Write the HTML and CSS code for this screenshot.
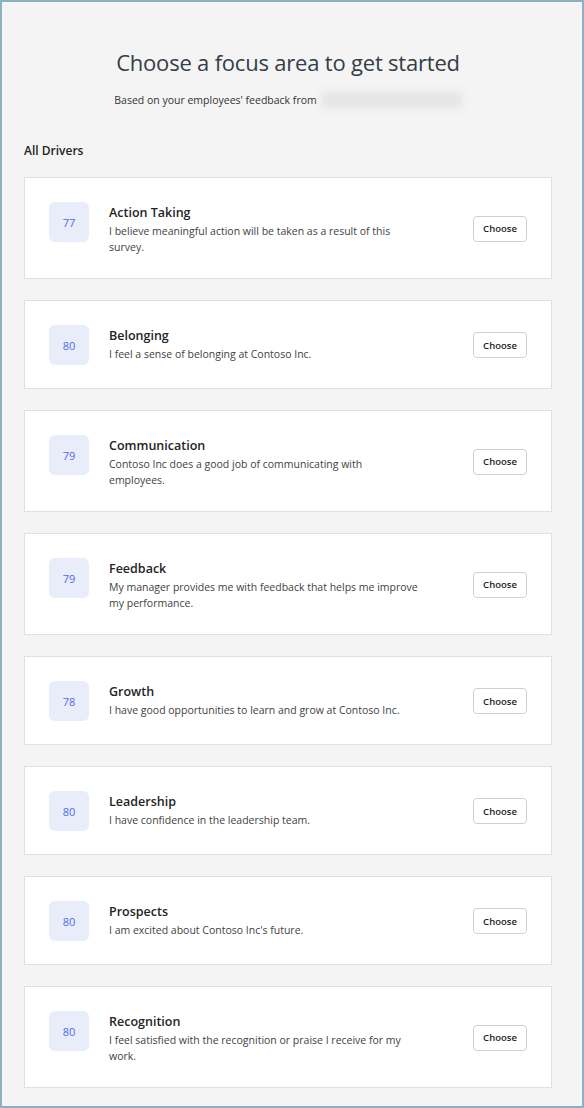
FILE: index.html
```html
<!DOCTYPE html>
<html lang="en">
<head>
<meta charset="utf-8">
<title>Choose a focus area</title>
<link rel="stylesheet" href="styles.css">
</head>
<body>
<div class="frame">
  <header class="intro">
    <h1 class="title">Choose a focus area to get started</h1>
    <p class="subtitle"><span>Based on your employees' feedback from</span><span class="redacted"></span></p>
  </header>
  <h2 class="section">All Drivers</h2>
  <ul class="list">
    <li class="card"><div class="score">77</div><div class="text"><div class="name">Action Taking</div><div class="desc">I believe meaningful action will be taken as a result of this survey.</div></div><button class="choose">Choose</button></li>
    <li class="card"><div class="score">80</div><div class="text"><div class="name">Belonging</div><div class="desc">I feel a sense of belonging at Contoso Inc.</div></div><button class="choose">Choose</button></li>
    <li class="card"><div class="score">79</div><div class="text"><div class="name">Communication</div><div class="desc">Contoso Inc does a good job of communicating with employees.</div></div><button class="choose">Choose</button></li>
    <li class="card"><div class="score">79</div><div class="text"><div class="name">Feedback</div><div class="desc">My manager provides me with feedback that helps me improve my performance.</div></div><button class="choose">Choose</button></li>
    <li class="card"><div class="score">78</div><div class="text"><div class="name">Growth</div><div class="desc">I have good opportunities to learn and grow at Contoso Inc.</div></div><button class="choose">Choose</button></li>
    <li class="card"><div class="score">80</div><div class="text"><div class="name">Leadership</div><div class="desc">I have confidence in the leadership team.</div></div><button class="choose">Choose</button></li>
    <li class="card"><div class="score">80</div><div class="text"><div class="name">Prospects</div><div class="desc">I am excited about Contoso Inc's future.</div></div><button class="choose">Choose</button></li>
    <li class="card"><div class="score">80</div><div class="text"><div class="name">Recognition</div><div class="desc">I feel satisfied with the recognition or praise I receive for my work.</div></div><button class="choose">Choose</button></li>
  </ul>
</div>
</body>
</html>
```
FILE: styles.css
```css
* { box-sizing: border-box; }
html, body { margin: 0; padding: 0; }
body {
  font-family: "Open Sans", "Noto Sans", "Liberation Sans", sans-serif;
  color: #242424;
}
.frame {
  width: 584px;
  height: 1108px;
  border: 2px solid #8fb0c3;
  background: #f4f4f4;
  padding: 0 30px 0 22px;
  overflow: hidden;
}
.intro {
  padding-top: 45px;
  text-align: center;
}
.title {
  margin: 0;
  font-size: 22px;
  line-height: 30px;
  font-weight: 400;
  color: #343d48;
  letter-spacing: -0.2px;
}
.subtitle {
  margin: 16px 0 0;
  display: flex;
  justify-content: center;
  align-items: center;
  gap: 5px;
  font-size: 10.5px;
  line-height: 14px;
  color: #333;
  height: 14px;
}
.redacted {
  display: inline-block;
  width: 140px;
  height: 16px;
  background: #e4e4e4;
  filter: blur(4px);
  border-radius: 4px;
}
.section {
  margin: 35px 0 0;
  font-size: 12px;
  line-height: 18px;
  font-weight: 600;
  color: #242424;
}
.list {
  list-style: none;
  margin: 17px 0 0;
  padding: 0;
  display: flex;
  flex-direction: column;
  gap: 21px;
}
.card {
  display: flex;
  align-items: flex-start;
  background: #fff;
  border: 1px solid #e0e0e0;
  padding: 24px 24px 23px;
}
.score {
  flex: 0 0 40px;
  height: 40px;
  border-radius: 6px;
  background: #e9ecf9;
  color: #4f6bed;
  font-size: 11px;
  display: flex;
  align-items: center;
  justify-content: center;
}
.text {
  flex: 1;
  margin-left: 20px;
  max-width: 311px;
}
.name {
  font-size: 12.5px;
  line-height: 21px;
  font-weight: 600;
  color: #242424;
}
.desc {
  font-size: 10.5px;
  line-height: 16px;
  color: #424242;
}
.choose {
  margin-left: auto;
  align-self: center;
  width: 54px;
  height: 26px;
  padding: 0;
  background: #fff;
  border: 1px solid #cfcfcf;
  border-radius: 4px;
  font-family: inherit;
  font-size: 9.5px;
  font-weight: 600;
  color: #242424;
}
```
